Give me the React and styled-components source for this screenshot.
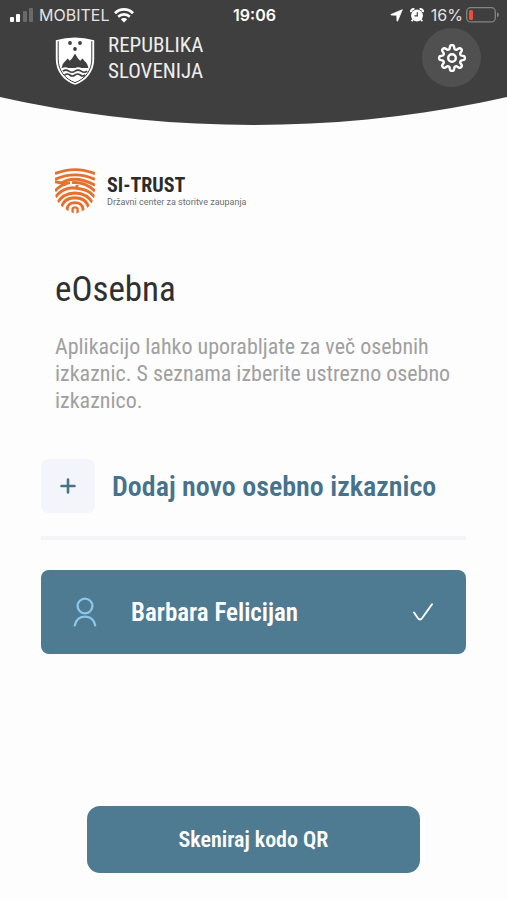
import React from 'react'
import styled, { createGlobalStyle } from 'styled-components'

const GlobalStyle = createGlobalStyle`
  *{
    box-sizing: border-box;
  }
  body{
    margin: 0;
    background: #fdfdfe;
    font-family: "Roboto Condensed", Roboto, "Liberation Sans", sans-serif;
  }
`

// eight soft teeth around the centre of a 30x30 box
const gearPath = () => {
  const points = []
  for (let i = 0; i < 160; i++) {
    const angle = (i / 160) * Math.PI * 2
    const r = 11 + 2 * Math.tanh(1.8 * Math.cos(angle * 8))
    points.push(`${(15 + r * Math.sin(angle)).toFixed(2)} ${(15 - r * Math.cos(angle)).toFixed(2)}`)
  }
  return `M${points.join('L')}Z`
}

const SignalIcon = () => (
  <svg width="24" height="14" viewBox="0 0 24 14" aria-hidden="true">
    <rect x="0" y="9" width="4" height="5" rx="1" fill="#fff" />
    <rect x="6" y="6" width="4" height="8" rx="1" fill="#fff" />
    <rect x="13" y="3" width="4" height="11" rx="1" fill="#6a6a6a" />
    <rect x="19" y="0" width="4" height="14" rx="1" fill="#6a6a6a" />
  </svg>
)

const WifiIcon = () => (
  <svg width="20" height="15" viewBox="0 0 20 15" fill="none" stroke="#fff" strokeWidth="2.7" aria-hidden="true">
    <path d="M1 5.2C6 .2 14 .2 19 5.2" />
    <path d="M4.2 8.7C7.4 5.6 12.6 5.6 15.8 8.7" />
    <path d="M6.8 11.2C8.6 9.5 11.4 9.5 13.2 11.2L10 14.6Z" fill="#fff" stroke="none" />
  </svg>
)

const LocationIcon = () => (
  <svg width="13" height="13" viewBox="0 0 13 13" fill="#fff" stroke="#fff" strokeWidth=".8" strokeLinejoin="round" aria-hidden="true">
    <path d="M12.3.7 7.6 12Q7.2 12.7 7 11.8L6.8 6.2 1.2 6Q.4 5.8 1.1 5.4Z" />
  </svg>
)

const AlarmIcon = () => (
  <svg width="14" height="14" viewBox="0 0 14 14" aria-hidden="true">
    <path d="M.9 4.2A2.8 2.8 0 0 1 4.4 1.1M9.6 1.1A2.8 2.8 0 0 1 13.1 4.2" fill="none" stroke="#fff" strokeWidth="2" />
    <path d="m3 11.5-1.3 1.8M11 11.5l1.3 1.8" stroke="#fff" strokeWidth="1.8" />
    <circle cx="7" cy="7.5" r="5.9" fill="#fff" />
    <path d="M7.3 4.2v3.6H4.5" fill="none" stroke="#3f3f3f" strokeWidth="1.2" />
  </svg>
)

const BatteryIcon = () => (
  <svg width="33" height="16" viewBox="0 0 33 16" aria-hidden="true">
    <rect x=".7" y=".7" width="28.6" height="14.2" rx="4" fill="none" stroke="#858585" strokeWidth="1.3" />
    <rect x="3" y="3" width="4" height="10" rx="1.5" fill="#ef4c3c" />
    <path d="M31 5.3q2 .9 2 2.5t-2 2.5Z" fill="#858585" />
  </svg>
)

const CrestIcon = () => (
  <svg width="40" height="48" viewBox="0 0 40 48" aria-hidden="true">
    <path d="M.8 3.2Q20-2 39.2 3.2V22C39.2 35 31 44 20 47.8 9 44 .8 35 .8 22Z" fill="#fff" />
    <path d="M3.2 4.2V22C3.2 33.5 10 42 20 45.6 30 42 36.8 33.5 36.8 22V4.2" fill="none" stroke="#3f3f3f" strokeWidth="1" />
    <circle cx="15" cy="6" r="1.9" fill="#3f3f3f" />
    <circle cx="25" cy="6" r="1.9" fill="#3f3f3f" />
    <circle cx="20" cy="12" r="1.9" fill="#3f3f3f" />
    <path d="M6.6 31Q7.6 26 10.5 24L12.5 21.5 14.8 23.8 17 21.5 20 16.5 23 21.5 25.2 23.8 27.5 21.5 29.5 24Q32.4 26 33.4 31Z" fill="#3f3f3f" />
    <path d="M7 32.2q3.2-2.2 6.5 0t6.5 0 6.5 0 6.5 0" fill="none" stroke="#fff" strokeWidth="1.8" />
    <path d="M7.8 34.2q3-2.2 6.1 0t6.1 0 6.1 0 6.1 0M9.6 38q2.6-2 5.2 0t5.2 0 5.2 0 5.2 0" fill="none" stroke="#3f3f3f" strokeWidth="1.6" />
  </svg>
)

const FingerprintIcon = () => (
  <svg width="41" height="46" viewBox="0 0 41 46" fill="none" stroke="#e5712f" strokeWidth="2.9" aria-hidden="true">
    <clipPath id="shield">
      <path d="M0 0H40V24C40 35 32 42 20.5 46 9 42 0 35 0 24Z" />
    </clipPath>
    <g clipPath="url(#shield)">
      <path d="M0 5.6Q20-2.4 40 5.6" />
      <path d="M0 11.4Q20 2.4 40 11.4" />
      <path d="M0 13.8 6.5 15Q20 6.6 40 17.2" />
      <path d="M0 23Q6 16 15 14.6M6 15.2 11 17" />
      <path d="M17 14.6Q30 13.4 40 23.2" />
      <path d="M0 29.4Q7 20.2 17.5 19.8L25 20.8Q34 22 40 29.4M22 17v4" />
      <path d="M2 35.4Q7.6 25.4 20 25 32.4 25.4 38 35.4" />
      <path d="M6.2 40.6Q8.2 30 20 29.8 31.8 30 33.8 40.6" />
      <path d="M12.2 43.6V40.8Q13 34.8 20 34.6 27 34.8 28 40.8V43.6" />
      <path d="M17.6 46V41Q17.8 39.4 20 39.4 22.4 39.4 22.6 41V46" strokeWidth="2.4" />
    </g>
  </svg>
)

const GearIcon = () => (
  <svg width="30" height="30" viewBox="0 0 30 30" fill="none" stroke="#fff" strokeWidth="2.4" strokeLinejoin="round" aria-hidden="true">
    <path d={gearPath()} />
    <circle cx="15" cy="15" r="3.8" />
  </svg>
)

const PlusIcon = () => (
  <svg width="16" height="16" viewBox="0 0 16 16" stroke="#47728b" strokeWidth="2.6" strokeLinecap="round" aria-hidden="true">
    <path d="M8 1.5v13M1.5 8h13" />
  </svg>
)

const PersonIcon = () => (
  <svg width="24" height="30" viewBox="0 0 24 30" fill="none" stroke="#8dc6e6" strokeWidth="2.3" strokeLinecap="round" aria-hidden="true">
    <circle cx="12" cy="9" r="7.4" />
    <path d="M1.8 28.4C4 16.6 20 16.6 22.2 28.4" />
  </svg>
)

const CheckIcon = () => (
  <svg width="20" height="18" viewBox="0 0 20 18" fill="none" stroke="#fff" strokeWidth="1.9" strokeLinecap="round" strokeLinejoin="round" aria-hidden="true">
    <path d="M1 9.5 4.8 15Q7 18 9.2 15L19 1.2" />
  </svg>
)

const App = () => {
  return (
    <Screen>
      <GlobalStyle />
      <Header>
        <StatusBar>
          <StatusGroup>
            <SignalIcon />
            <span>MOBITEL</span>
            <WifiIcon />
          </StatusGroup>
          <Clock>19:06</Clock>
          <StatusGroup $end>
            <LocationIcon />
            <AlarmIcon />
            <Battery>
              16%
              <BatteryIcon />
            </Battery>
          </StatusGroup>
        </StatusBar>
        <TitleRow>
          <Crest><CrestIcon /></Crest>
          <State>REPUBLIKA<br />SLOVENIJA</State>
          <SettingsButton type="button" aria-label="Nastavitve">
            <GearIcon />
          </SettingsButton>
        </TitleRow>
      </Header>
      <Content>
        <Intro>
          <Trust>
            <FingerprintIcon />
            <div>
              <TrustName>SI-TRUST</TrustName>
              <TrustText>Državni center za storitve zaupanja</TrustText>
            </div>
          </Trust>
          <Heading>eOsebna</Heading>
          <Text>
            Aplikacijo lahko uporabljate za več osebnih izkaznic. S seznama izberite ustrezno osebno izkaznico.
          </Text>
        </Intro>
        <AddButton type="button">
          <AddBox><PlusIcon /></AddBox>
          Dodaj novo osebno izkaznico
        </AddButton>
        <Divider />
        <CardButton type="button" aria-pressed="true">
          <PersonIcon />
          <CardName>Barbara Felicijan</CardName>
          <CheckIcon />
        </CardButton>
        <ScanButton type="button">Skeniraj kodo QR</ScanButton>
      </Content>
    </Screen>
  )
}

const Screen = styled.div`
  display: flex;
  flex-direction: column;
  min-height: 100vh;
`

const Header = styled.header`
  padding-bottom: 38px;
  background: #3f3f3f;
  color: #fff;
  clip-path: ellipse(229% 1161px at 50% -1036px);
`

const StatusBar = styled.div`
  display: grid;
  grid-template-columns: 1fr auto 1fr;
  align-items: center;
  height: 28px;
  padding: 2px 8px 0 10px;
  font-family: Inter, Roboto, sans-serif;
  font-size: 16px;
  line-height: 20px;
`

const StatusGroup = styled.div`
  display: flex;
  align-items: center;
  justify-content: ${(p) => (p.$end ? 'flex-end' : 'flex-start')};
  gap: ${(p) => (p.$end ? '7px' : '5px')};
  color: #e4e4e4;
`

const Battery = styled.span`
  display: flex;
  align-items: center;
  gap: 3px;
`

const Clock = styled.time`
  font-weight: 600;
`

const TitleRow = styled.div`
  display: flex;
  align-items: center;
  padding: 0 26px 0 55px;
`

const Crest = styled.div`
  display: flex;
  margin: 6px 13px 0 0;
`

const State = styled.div`
  flex: 1;
  color: #eee;
  font-size: 21px;
  line-height: 26px;
`

const SettingsButton = styled.button`
  display: flex;
  align-items: center;
  justify-content: center;
  width: 59px;
  height: 59px;
  padding: 0;
  border: none;
  border-radius: 50%;
  background: #505050;
`

const Content = styled.main`
  flex: 1;
  display: flex;
  flex-direction: column;
  padding: 43px 41px 27px;
`

const Intro = styled.section`
  padding: 0 14px;
`

const Trust = styled.div`
  display: flex;
  align-items: center;
  gap: 11px;
`

const TrustName = styled.div`
  color: #2b2b2b;
  font-size: 20px;
  font-weight: 700;
  line-height: 22px;
`

const TrustText = styled.div`
  color: #6d6d6d;
  font-family: Roboto, sans-serif;
  font-size: 9px;
  line-height: 12px;
`

const Heading = styled.h1`
  margin: 55px 0 22px;
  color: #303030;
  font-size: 35px;
  font-weight: 400;
  line-height: 42px;
`

const Text = styled.p`
  margin: 0;
  color: #a0a0a0;
  font-size: 22px;
  line-height: 27px;
`

const AddButton = styled.button`
  display: flex;
  align-items: center;
  gap: 17px;
  margin-top: 45px;
  padding: 0;
  border: none;
  background: none;
  color: #47728b;
  font-family: inherit;
  font-size: 28px;
  font-weight: 600;
  text-align: left;
`

const AddBox = styled.span`
  display: flex;
  align-items: center;
  justify-content: center;
  width: 54px;
  height: 54px;
  border-radius: 7px;
  background: #f3f5fa;
`

const Divider = styled.hr`
  width: 100%;
  height: 4px;
  margin: 23px 0 30px;
  border: none;
  background: #f5f5f8;
`

const CardButton = styled.button`
  display: flex;
  align-items: center;
  height: 84px;
  padding: 0 33px 0 32px;
  border: none;
  border-radius: 8px;
  background: #4e7a92;
  color: #fff;
  font-family: inherit;
  font-size: 25px;
  font-weight: 600;
  text-align: left;
`

const CardName = styled.span`
  flex: 1;
  padding-left: 34px;
`

const ScanButton = styled.button`
  height: 67px;
  margin: auto 46px 0;
  border: none;
  border-radius: 13px;
  background: #4e7a92;
  color: #fff;
  font-family: inherit;
  font-size: 22px;
  font-weight: 600;
`

export default App
